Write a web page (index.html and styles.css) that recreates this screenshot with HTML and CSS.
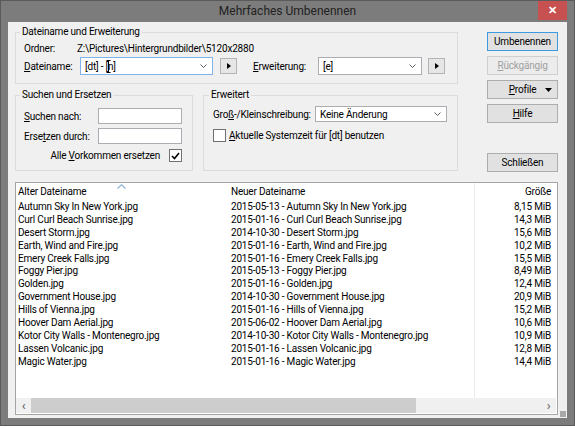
FILE: index.html
```html
<!DOCTYPE html>
<html lang="de">
<head>
    <meta charset="UTF-8">
    <title>Mehrfaches Umbenennen</title>
    <link rel="stylesheet" href="styles.css">
</head>
<body>

<div class="window">
    <div class="titlebar">
        <span></span>
        <span class="title">Mehrfaches Umbenennen</span>
        <div class="close">&#x2715;</div>
    </div>

    <div class="client">
        <div class="top">
            <div class="groups">
                <fieldset class="group group-name">
                    <legend>Dateiname und Erweiterung</legend>
                    <div class="row-folder">
                        <span class="lbl-folder">Ordner:</span>
                        <span>Z:\Pictures\Hintergrundbilder\5120x2880</span>
                    </div>
                    <div class="row-name">
                        <span class="lbl-name"><u>D</u>ateiname:</span>
                        <div class="combo combo-name focused">
                            <span>[dt] - [n]</span>
                            <svg class="chev" width="7" height="4" viewBox="0 0 7 4"><polyline points="0.5,0.5 3.5,3.5 6.5,0.5" fill="none" stroke="#606060" stroke-width="1"/></svg>
                            <!-- Mauszeiger -->
                            <svg class="ibeam" width="5" height="13" viewBox="0 0 5 13"><path d="M0.5,0.5 H4.5 M2.5,0.5 V12.5 M0.5,12.5 H4.5" fill="none" stroke="#000" stroke-width="1"/></svg>
                        </div>
                        <div class="arrow-btn"><svg width="4" height="6" viewBox="0 0 4 6"><polygon points="0,0 4,3 0,6" fill="#000"/></svg></div>
                        <span class="lbl-ext"><u>E</u>rweiterung:</span>
                        <div class="combo combo-ext">
                            <span>[e]</span>
                            <svg class="chev" width="7" height="4" viewBox="0 0 7 4"><polyline points="0.5,0.5 3.5,3.5 6.5,0.5" fill="none" stroke="#606060" stroke-width="1"/></svg>
                        </div>
                        <div class="arrow-btn"><svg width="4" height="6" viewBox="0 0 4 6"><polygon points="0,0 4,3 0,6" fill="#000"/></svg></div>
                    </div>
                </fieldset>

                <div class="group-row">
                    <fieldset class="group group-search">
                        <legend>Suchen und Ersetzen</legend>
                        <div class="field">
                            <span class="lbl-search"><u>S</u>uchen nach:</span>
                            <div class="textbox"></div>
                        </div>
                        <div class="field">
                            <span class="lbl-search">Erse<u>t</u>zen durch:</span>
                            <div class="textbox"></div>
                        </div>
                        <div class="field field-check">
                            <span>Alle <u>V</u>orkommen ersetzen</span>
                            <div class="checkbox">
                                <svg width="9" height="8" viewBox="0 0 9 8"><polyline points="1,4 3.5,6.5 8,1" fill="none" stroke="#000" stroke-width="1.6"/></svg>
                            </div>
                        </div>
                    </fieldset>

                    <fieldset class="group group-adv">
                        <legend>Erweitert</legend>
                        <div class="field">
                            <span class="lbl-case">Gro<u>ß</u>-/Kleinschreibung:</span>
                            <div class="combo combo-case">
                                <span>Keine Änderung</span>
                                <svg class="chev" width="7" height="4" viewBox="0 0 7 4"><polyline points="0.5,0.5 3.5,3.5 6.5,0.5" fill="none" stroke="#606060" stroke-width="1"/></svg>
                            </div>
                        </div>
                        <div class="field field-time">
                            <div class="checkbox"></div>
                            <span><u>A</u>ktuelle Systemzeit für [dt] benutzen</span>
                        </div>
                    </fieldset>
                </div>
            </div>

            <div class="buttons">
                <div class="button default">Umbenennen</div>
                <div class="button disabled"><u>R</u>ückgängig</div>
                <div class="button dropdown"><span><u>P</u>rofile</span><svg width="7" height="4" viewBox="0 0 7 4"><polygon points="0,0 7,0 3.5,4" fill="#000"/></svg></div>
                <div class="button"><u>H</u>ilfe</div>
                <div class="button close-btn">Schließen</div>
            </div>
        </div>

        <div class="list">
            <div class="list-head">
                <span class="col-old">Alter Dateiname</span>
                <span class="col-new">Neuer Dateiname</span>
                <span class="col-size">Größe</span>
                <svg class="sort" width="9" height="5" viewBox="0 0 9 5"><polyline points="0.5,4.5 4.5,0.8 8.5,4.5" fill="none" stroke="#8fb3d6" stroke-width="1.2"/></svg>
            </div>
            <div class="list-body" id="rows"></div>
            <div class="hscroll">
                <span class="sb-arrow">&lsaquo;</span>
                <div class="sb-track">
                    <div class="sb-thumb"></div>
                </div>
                <span class="sb-arrow">&rsaquo;</span>
            </div>
        </div>
        <div class="grip"></div>
    </div>
</div>

<script>
const files = [
    ['Autumn Sky In New York.jpg', '2015-05-13', '8,15 MiB'],
    ['Curl Curl Beach Sunrise.jpg', '2015-01-16', '14,3 MiB'],
    ['Desert Storm.jpg', '2014-10-30', '15,6 MiB'],
    ['Earth, Wind and Fire.jpg', '2015-01-16', '10,2 MiB'],
    ['Emery Creek Falls.jpg', '2015-01-16', '15,5 MiB'],
    ['Foggy Pier.jpg', '2015-05-13', '8,49 MiB'],
    ['Golden.jpg', '2015-01-16', '12,4 MiB'],
    ['Government House.jpg', '2014-10-30', '20,9 MiB'],
    ['Hills of Vienna.jpg', '2015-01-16', '15,2 MiB'],
    ['Hoover Dam Aerial.jpg', '2015-06-02', '10,6 MiB'],
    ['Kotor City Walls - Montenegro.jpg', '2014-10-30', '10,9 MiB'],
    ['Lassen Volcanic.jpg', '2015-01-16', '12,8 MiB'],
    ['Magic Water.jpg', '2015-01-16', '14,4 MiB']
];

const rows = document.getElementById('rows');
files.forEach(f => {
    let row = document.createElement('div');
    row.className = 'list-row';
    row.innerHTML = `<span class="col-old">${f[0]}</span>`
        + `<span class="col-new">${f[1]} - ${f[0]}</span>`
        + `<span class="col-size">${f[2]}</span>`;
    rows.appendChild(row);
});
</script>

</body>
</html>
```

FILE: styles.css
```css
body {
    margin: 0;
    background-color: #ffffff;
    font-family: Roboto, "Liberation Sans", sans-serif;
    font-size: 10px;
    letter-spacing: -0.2px;
    color: #000;
}

u {
    text-decoration-thickness: 1px;
    text-underline-offset: 1px;
}

.window {
    width: 573px;
    height: 424px;
    background-color: #7c7c7c;
    border: 1px solid #5a5a5a;
    display: flex;
    flex-direction: column;
    box-shadow: 0 2px 3px rgba(0, 0, 0, 0.25);
}

.titlebar {
    height: 21px;
    display: grid;
    grid-template-columns: 1fr auto 1fr;
    align-items: start;
}

.title {
    font-size: 12px;
    letter-spacing: 0;
    color: #222;
    line-height: 21px;
}

.close {
    justify-self: end;
    margin-right: 7px;
    width: 29px;
    height: 19px;
    background-color: #c75050;
    color: #fff;
    font-size: 11px;
    font-weight: bold;
    display: flex;
    justify-content: center;
    align-items: center;
}

.client {
    flex: 1;
    margin: 0 7px 7px 7px;
    background-color: #f0f0f0;
    display: flex;
    flex-direction: column;
    position: relative;
}

.top {
    display: flex;
    gap: 29px;
    padding: 3px 9px 0 7px;
}

.groups {
    width: 443px;
    display: flex;
    flex-direction: column;
    gap: 4px;
}

.group {
    margin: 0;
    border: 1px solid #dcdcdc;
    padding: 0 8px 0 8px;
    min-width: 0;
    box-sizing: border-box;
}

.group legend {
    padding: 0 2px;
    margin-left: -4px;
    line-height: 14px;
    color: #000;
}

/* Dateiname und Erweiterung */
.group-name {
    height: 59px;
    padding-top: 3px;
}

.row-folder {
    display: flex;
    height: 14px;
    line-height: 14px;
    margin-bottom: 1px;
}

.lbl-folder {
    width: 53px;
}

.row-name {
    display: flex;
    align-items: center;
    height: 18px;
}

.lbl-name {
    width: 56px;
}

.combo {
    background-color: #fff;
    border: 1px solid #abadb3;
    box-sizing: border-box;
    display: flex;
    align-items: center;
    justify-content: space-between;
    padding: 0 5px 0 4px;
}

.combo.focused {
    border-color: #7eb4ea;
}

.combo-name {
    width: 133px;
    height: 18px;
    position: relative;
}

.ibeam {
    position: absolute;
    left: 25px;
    top: 2px;
}

.combo-ext {
    width: 104px;
    height: 18px;
}

.arrow-btn {
    width: 17px;
    height: 16px;
    box-sizing: border-box;
    margin-left: 7px;
    background-color: #e6e6e6;
    border: 1px solid #b4b4b4;
    display: flex;
    justify-content: center;
    align-items: center;
}

.lbl-ext {
    margin-left: 16px;
    width: 65px;
}

.row-name .arrow-btn:last-child {
    margin-left: 6px;
}

/* untere Gruppen */
.group-row {
    display: flex;
    gap: 10px;
}

.group-search {
    width: 178px;
    height: 83px;
    padding-top: 6px;
}

.group-adv {
    width: 255px;
    height: 83px;
    padding: 4px 8px 0 9px;
}

.field {
    display: flex;
    align-items: center;
    margin-bottom: 4px;
}

.lbl-search {
    width: 74px;
}

.textbox {
    width: 84px;
    height: 16px;
    box-sizing: border-box;
    background-color: #fff;
    border: 1px solid #abadb3;
}

.field-check {
    justify-content: flex-end;
    gap: 9px;
    margin-top: 5px;
    padding-right: 2px;
}

.checkbox {
    width: 13px;
    height: 13px;
    box-sizing: border-box;
    background-color: #fff;
    border: 1px solid #707070;
    display: flex;
    justify-content: center;
    align-items: center;
}

.lbl-case {
    width: 102px;
}

.combo-case {
    width: 132px;
    height: 16px;
}

.field-time {
    gap: 3px;
    margin-top: 7px;
}

/* Schaltflächen rechts */
.buttons {
    width: 71px;
    margin-top: 7px;
    display: flex;
    flex-direction: column;
    gap: 5px;
}

.button {
    height: 19px;
    box-sizing: border-box;
    background-color: #e1e1e1;
    border: 1px solid #adadad;
    display: flex;
    justify-content: center;
    align-items: center;
}

.button.default {
    border-color: #3c9ae0;
}

.button.disabled {
    color: #a0a0a0;
    background-color: #ececec;
    border-color: #cfcfcf;
}

.button.dropdown {
    position: relative;
}

.button.dropdown svg {
    position: absolute;
    right: 5px;
    top: 7px;
}

.button.close-btn {
    margin-top: 25px;
}

/* Liste */
.list {
    margin: 10px 9px 0 7px;
    height: 233px;
    box-sizing: border-box;
    background-color: #fff;
    border: 1px solid #a5a5a5;
    display: flex;
    flex-direction: column;
    background-image: linear-gradient(to right, transparent 458px, #ececec 458px, #ececec 459px, transparent 459px);
}

.list-head,
.list-row {
    display: grid;
    grid-template-columns: 213px 243px 1fr;
    padding: 0 6px 0 2px;
    white-space: nowrap;
}

.list-head {
    height: 17px;
    line-height: 18px;
    position: relative;
}

.list-row {
    height: 12.9px;
    line-height: 13px;
}

.col-size {
    text-align: right;
}

.sort {
    position: absolute;
    left: 101px;
    top: 1px;
}

.list-body {
    flex: 1;
}

.hscroll {
    height: 15px;
    display: flex;
    align-items: center;
    background-color: #f0f0f0;
    margin: 0 1px 1px 0;
}

.sb-arrow {
    width: 15px;
    text-align: center;
    font-size: 13px;
    line-height: 15px;
    color: #555;
}

.sb-track {
    flex: 1;
    height: 15px;
}

.sb-thumb {
    width: 385px;
    height: 15px;
    background-color: #cdcdcd;
}

.grip {
    position: absolute;
    right: 1px;
    bottom: 1px;
    width: 6px;
    height: 6px;
    background-image: radial-gradient(circle, #a8a8a8 0.8px, transparent 1px);
    background-size: 2px 2px;
}
```
